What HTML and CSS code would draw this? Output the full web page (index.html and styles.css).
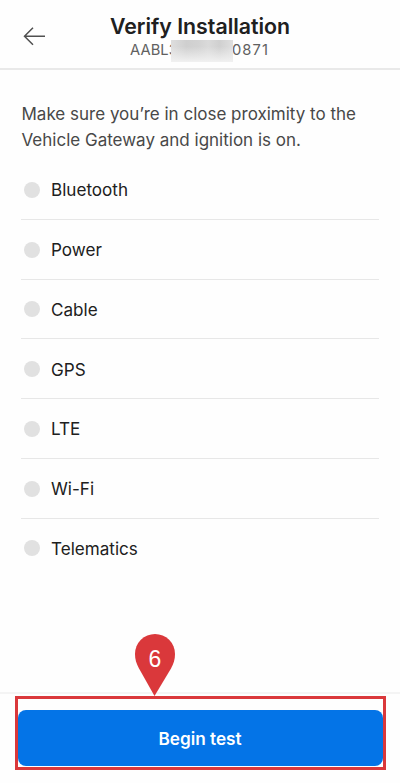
FILE: index.html
```html
<!DOCTYPE html>
<html lang="en">
<head>
<meta charset="utf-8">
<title>Verify Installation</title>
<link rel="stylesheet" href="styles.css">
</head>
<body>
<div class="screen">
  <header class="header">
    <svg class="back" viewBox="0 0 24 20" aria-hidden="true"><path d="M22 10.3H1.5M10 1.8 1.5 10.3l8.500 8.500"/></svg>
    <div class="heading">
      <h1>Verify Installation</h1>
      <p class="serial"><span class="serial-start">AABL3</span><span class="redacted"></span><span class="serial-end">0871</span></p>
    </div>
  </header>
  <main class="content">
    <p class="intro">Make sure you’re in close proximity to the<br>Vehicle Gateway and ignition is on.</p>
    <ul class="checks">
      <li>Bluetooth</li>
      <li>Power</li>
      <li>Cable</li>
      <li>GPS</li>
      <li>LTE</li>
      <li>Wi-Fi</li>
      <li>Telematics</li>
    </ul>
  </main>
  <footer class="footer">
    <div class="highlight">
      <button class="begin">Begin test</button>
      <div class="pin">
        <svg viewBox="0 0 42 63" aria-hidden="true"><path d="M20.500 62 5 34.500C2.500 30 1 25.500 1 20a20 20 0 0 1 40 0C41 25.500 39.500 30 37 34.500z"/></svg>
        <span>6</span>
      </div>
    </div>
  </footer>
</div>
</body>
</html>
```
FILE: styles.css
```css
* { box-sizing: border-box; }
body { margin: 0; background: #fefefe; font-family: Inter, sans-serif; color: #202020; }
h1, p, ul { margin: 0; padding: 0; }
.screen { width: 400px; height: 783px; display: flex; flex-direction: column; overflow: hidden; }
.header { height: 70px; border-bottom: 2px solid #e9e9e9; display: grid; grid-template-columns: 23px 1fr 23px; padding: 0 23px; flex: none; }
.back { width: 24px; height: 20px; margin-top: 26px; fill: none; stroke: #505050; stroke-width: 1.5; }
.heading { display: flex; flex-direction: column; align-items: center; padding-top: 12px; }
h1 { font-size: 21.3px; line-height: 28px; font-weight: 600; white-space: nowrap; }
.serial { display: flex; height: 22px; margin-left: -1px; line-height: 20px; font-size: 14.7px; color: #606060; }
.serial-start { width: 41px; letter-spacing: .1px; }
.redacted { position: relative; width: 62px; background: linear-gradient(#f1f1f100 30%, #f1f1f1), linear-gradient(90deg, #dedede, #cfcfcf 25%, #d3d3d3 45%, #dadada 60%, #d0d0d0 78%, #dfdfdf); }
.serial-end { letter-spacing: 1.1px; margin-left: -1px; }
.content { flex: 1; padding: 31px 21px 0; }
.intro { padding: 1px 0 0 .5px; font-size: 17px; line-height: 25.5px; color: #484848; white-space: nowrap; }
.checks { list-style: none; margin-top: 7px; }
.checks li { display: flex; align-items: center; height: 59.75px; padding-top: 1.2px; font-size: 17.1px; border-bottom: 1.5px solid #e7e7e7; }
.checks li:last-child { border-bottom-color: transparent; }
.checks li::before { content: ""; width: 16px; height: 16px; margin: 0 11px 0 3px; border-radius: 50%; background: #e1e1e1; }
.footer { flex: none; height: 91px; border-top: 2px solid #f4f4f4; padding: 2px 14px 0 15px; }
.highlight { position: relative; height: 74px; border: 3px solid #da383b; padding-top: 11px; }
.begin { display: block; width: 365px; height: 56px; padding: 0 1px 0 0; border: 0; border-radius: 8px; background: #0474e7; color: #fff; font: 600 17.2px Inter, sans-serif; }
.pin { position: absolute; left: 116px; top: -65px; width: 42px; height: 63px; }
.pin svg { display: block; width: 42px; height: 63px; fill: #da383b; }
.pin span { position: absolute; inset: 10px 0 auto; text-align: center; color: #fff; font: 23px/30px "Liberation Sans", sans-serif; }
```
